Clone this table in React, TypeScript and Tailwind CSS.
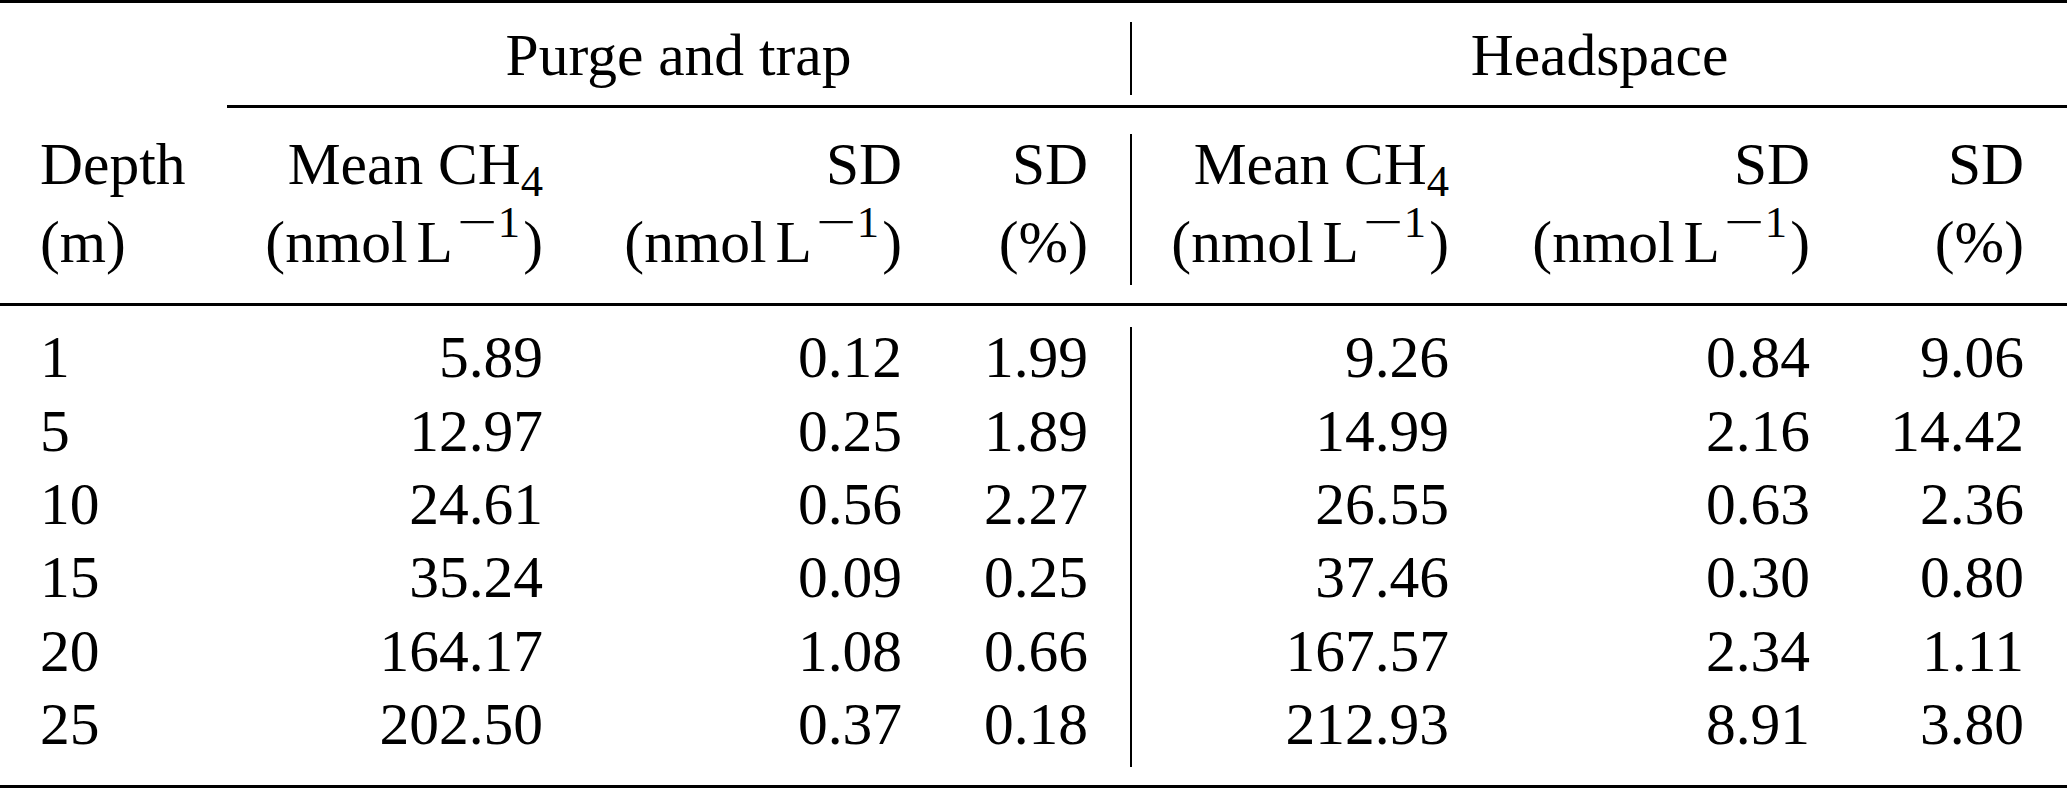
import React from "react";

const rows: string[][] = [
  ["1", "5.89", "0.12", "1.99", "9.26", "0.84", "9.06"],
  ["5", "12.97", "0.25", "1.89", "14.99", "2.16", "14.42"],
  ["10", "24.61", "0.56", "2.27", "26.55", "0.63", "2.36"],
  ["15", "35.24", "0.09", "0.25", "37.46", "0.30", "0.80"],
  ["20", "164.17", "1.08", "0.66", "167.57", "2.34", "1.11"],
  ["25", "202.50", "0.37", "0.18", "212.93", "8.91", "3.80"],
];

function Unit() {
  return (
    <span>
      (nmol<span className="ml-[9px]">L</span>
      <sup className="text-[0.75em] -top-[25px] ml-[4px]">
        <span className="inline-block w-[41px] text-left scale-x-[1.6] origin-left">−</span>1
      </sup>
      <span className="ml-[3px]">)</span>
    </span>
  );
}

function Mean() {
  return (
    <span>
      Mean CH<sub className="text-[0.75em] -bottom-[12px]">4</sub>
    </span>
  );
}

function HeadCell({ top, bottom, left }: { top: React.ReactNode; bottom: React.ReactNode; left?: boolean }) {
  return (
    <div className={left ? "pl-[40px] text-left" : "pr-[42px] text-right"}>
      <div className="whitespace-nowrap">{top}</div>
      <div className="whitespace-nowrap">{bottom}</div>
    </div>
  );
}

export default function App() {
  return (
    <div className="w-[2067px] h-[789px] bg-white text-black font-['Liberation_Serif',serif] text-[59.5px]">
      <div className="border-t-[3px] border-b-[3px] border-black">
        {/* Group header */}
        <div className="flex">
          <div className="w-[227px]" />
          <div className="flex border-b-[3px] border-black">
            <div className="w-[903px] text-center leading-[74px] pt-[14.9px] pb-[13.1px]">Purge and trap</div>
            <div className="w-[2px] bg-black mt-[19px] mb-[10px]" />
            <div className="w-[935px] text-center leading-[74px] pt-[14.9px] pb-[13.1px]">Headspace</div>
          </div>
        </div>

        {/* Column headers */}
        <div className="flex border-b-[3px] border-black leading-[77.5px]">
          <div className="grid grid-cols-[227px_358px_359px_186px] pt-[18.2px] pb-[21.8px]">
            <HeadCell left top="Depth" bottom="(m)" />
            <HeadCell top={<Mean />} bottom={<Unit />} />
            <HeadCell top="SD" bottom={<Unit />} />
            <HeadCell top="SD" bottom="(%)" />
          </div>
          <div className="w-[2px] bg-black mt-[26px] mb-[18px]" />
          <div className="grid grid-cols-[359px_361px_215px] pt-[18.2px] pb-[21.8px]">
            <HeadCell top={<Mean />} bottom={<Unit />} />
            <HeadCell top="SD" bottom={<Unit />} />
            <div className="pr-[43px] text-right">
              <div>SD</div>
              <div>(%)</div>
            </div>
          </div>
        </div>

        {/* Body */}
        <div className="flex leading-[73.4px]">
          <div className="grid grid-cols-[227px_358px_359px_186px] pt-[15.2px] pb-[23.4px]">
            {rows.map((r) => (
              <React.Fragment key={r[0]}>
                <div className="pl-[40px] text-left">{r[0]}</div>
                <div className="pr-[42px] text-right">{r[1]}</div>
                <div className="pr-[42px] text-right">{r[2]}</div>
                <div className="pr-[42px] text-right">{r[3]}</div>
              </React.Fragment>
            ))}
          </div>
          <div className="w-[2px] bg-black mt-[21px] mb-[18px]" />
          <div className="grid grid-cols-[359px_361px_215px] pt-[15.2px] pb-[23.4px]">
            {rows.map((r) => (
              <React.Fragment key={r[0]}>
                <div className="pr-[42px] text-right">{r[4]}</div>
                <div className="pr-[42px] text-right">{r[5]}</div>
                <div className="pr-[43px] text-right">{r[6]}</div>
              </React.Fragment>
            ))}
          </div>
        </div>
      </div>
    </div>
  );
}
